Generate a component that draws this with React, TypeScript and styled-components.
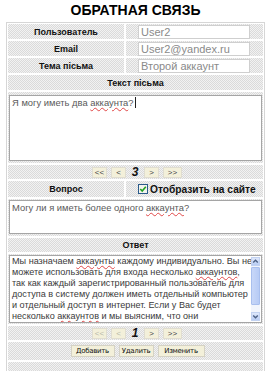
import styled, { createGlobalStyle } from "styled-components"

const GlobalStyle = createGlobalStyle`
    html, body {
        margin: 0;
        padding: 0;
        background: #fff;
    }
    body {
        font-family: "Liberation Sans", Arial, sans-serif;
    }
`

const answerLines = [
    ["Мы назначаем ", "аккаунты", " каждому индивидуально. Вы не"],
    ["можете использовать для входа несколько ", "аккаунтов", ","],
    ["так как каждый зарегистрированный пользователь для"],
    ["доступа в систему должен иметь отдельный компьютер"],
    ["и отдельный доступ в интернет. Если у Вас будет"],
    ["несколько ", "аккаунтов", " и мы выясним, что они"],
]

const Pager = ({ page, first }: { page: number, first?: boolean }) => (
    <PagerRow>
        <PageBtn $w={15} $off={first}>&lt;&lt;</PageBtn>
        <PageBtn $w={15} $off={first}>&lt;</PageBtn>
        <PageNum>{page}</PageNum>
        <PageBtn $w={15}>&gt;</PageBtn>
        <PageBtn $w={19}>&gt;&gt;</PageBtn>
    </PagerRow>
)

const Arrow = ({ up }: { up?: boolean }) => (
    <ArrowBtn>
        <svg width="7" height="7" viewBox="0 0 7 7">
            <path d={up ? "M1.2 4.6 L3.5 2.3 L5.8 4.6" : "M1.2 2.4 L3.5 4.7 L5.8 2.4"} stroke="#4d6185" strokeWidth="1.4" fill="none" />
        </svg>
    </ArrowBtn>
)

const App = () => {
    return (
        <Page>
            <GlobalStyle />
            <Title>ОБРАТНАЯ СВЯЗЬ</Title>
            <Form>
                <Row>
                    <Label>Пользователь</Label>
                    <ValueCell><Input>User2</Input></ValueCell>
                </Row>
                <Row>
                    <Label>Email</Label>
                    <ValueCell><Input>User2@yandex.ru</Input></ValueCell>
                </Row>
                <Row>
                    <Label>Тема пісьма</Label>
                    <ValueCell><Input>Второй аккаунт</Input></ValueCell>
                </Row>
                <Header>Текст пісьма</Header>
                <AreaCell $pad="3px 1px 2px">
                    <TextArea $h={64}>
                        <AreaText>Я могу иметь два <Typo>аккаунта</Typo>?<Caret /></AreaText>
                    </TextArea>
                </AreaCell>
                <Pager page={3} />
                <Row $h={16}>
                    <Label>Вопрос</Label>
                    <CheckCell>
                        <svg width="10" height="10" viewBox="0 0 10 10">
                            <rect x="0.5" y="0.5" width="9" height="9" fill="#f4f4ee" stroke="#2a5a8a" />
                            <path d="M2.3 5 L4.2 7 L7.8 2.8" stroke="#21a121" strokeWidth="1.6" fill="none" />
                        </svg>
                        Отобразить на сайте
                    </CheckCell>
                </Row>
                <AreaCell $pad="1px 1px 2px">
                    <TextArea $h={32}>
                        <AreaText>Могу ли я иметь более одного <Typo>аккаунта</Typo>?</AreaText>
                    </TextArea>
                </AreaCell>
                <Header $h={14}>Ответ</Header>
                <AreaCell $pad="1px">
                    <TextArea $h={66}>
                        <AnswerText>
                            {answerLines.map((line, i) => (
                                <Line key={i}>
                                    {line.map((part, j) => j === 1 ? <Typo key={j}>{part}</Typo> : <span key={j}>{part}</span>)}
                                </Line>
                            ))}
                        </AnswerText>
                        <Scrollbar>
                            <Arrow up />
                            <Track><Thumb /></Track>
                            <Arrow />
                        </Scrollbar>
                    </TextArea>
                </AreaCell>
                <Pager page={1} first />
                <ButtonRow>
                    <Button $w={44}>Добавить</Button>
                    <Button $w={35}>Удалить</Button>
                    <Button $w={47}>Изменить</Button>
                </ButtonRow>
                <EmptyRow />
            </Form>
        </Page>
    )
}

const dots = `
    background-color: #e8e8e8;
    background-image: repeating-conic-gradient(#dadada 0 25%, #f2f2f2 0 50%);
    background-size: 2px 2px;
`

const Page = styled.div`
    width: 268px;
    height: 371px;
    padding: 0 3px 0 6px;
    box-sizing: border-box;
    background: #fff;
`

const Title = styled.div`
    height: 22px;
    line-height: 21px;
    text-align: center;
    font-size: 14px;
    font-weight: bold;
    color: #000;
`

const Form = styled.div`
    display: flex;
    flex-direction: column;
    gap: 2px;
    border: 1px solid #d6d6d6;
    padding: 1px;
    background: #fff;
`

const Row = styled.div<{ $h?: number }>`
    display: grid;
    grid-template-columns: 116px 1fr;
    gap: 2px;
    height: ${p => p.$h ?? 15}px;
`

const Label = styled.div`
    ${dots}
    display: flex;
    align-items: center;
    justify-content: center;
    font-size: 9px;
    font-weight: bold;
    color: #111;
`

const ValueCell = styled.div`
    ${dots}
    display: flex;
    align-items: center;
    padding: 0 13px 0 12px;
`

const CheckCell = styled.div`
    ${dots}
    display: flex;
    align-items: center;
    gap: 2px;
    padding-left: 12px;
    font-size: 10.2px;
    font-weight: bold;
    color: #111;
    white-space: nowrap;
`

const Input = styled.div`
    flex: 1;
    height: 12px;
    line-height: 12px;
    background: #fff;
    border: 1px solid #cfcfcf;
    padding-left: 2px;
    font-size: 11px;
    color: #8a8a8a;
    white-space: nowrap;
    overflow: hidden;
`

const Header = styled.div<{ $h?: number }>`
    ${dots}
    height: ${p => p.$h ?? 15}px;
    display: flex;
    align-items: center;
    justify-content: center;
    font-size: 9px;
    font-weight: bold;
    color: #111;
`

const AreaCell = styled.div<{ $pad: string }>`
    ${dots}
    padding: ${p => p.$pad};
`

const TextArea = styled.div<{ $h: number }>`
    height: ${p => p.$h}px;
    background: #fff;
    border: 1px solid #a5a5a5;
    display: flex;
`

const AreaText = styled.div`
    flex: 1;
    padding: 1px 2px;
    font-size: 9.4px;
    line-height: 12px;
    color: #5a5a5a;
    white-space: nowrap;
`

const AnswerText = styled.div`
    flex: 1;
    overflow: hidden;
    padding: 0 2px;
    font-size: 9.1px;
    line-height: 11px;
    color: #3a3a3a;
`

const Line = styled.div`
    white-space: nowrap;
`

const Typo = styled.span`
    text-decoration: underline wavy #e04848;
    text-decoration-thickness: 1px;
    text-underline-offset: 1px;
`

const Caret = styled.span`
    display: inline-block;
    width: 1px;
    height: 11px;
    background: #222;
    vertical-align: -2px;
    margin-left: 1px;
`

const Scrollbar = styled.div`
    width: 9px;
    margin: 1px 1px 1px 0;
    display: flex;
    flex-direction: column;
    background: #f2f5fc;
`

const ArrowBtn = styled.div`
    height: 9px;
    display: flex;
    align-items: center;
    justify-content: center;
    background: linear-gradient(#dfe8fb, #b9cdf4);
    border: 1px solid #c2d2f1;
    box-sizing: border-box;
`

const Track = styled.div`
    flex: 1;
    padding: 1px 0;
    display: flex;
`

const Thumb = styled.div`
    flex: 1;
    margin: 0 0 6px;
    background: linear-gradient(90deg, #c8d7f8, #b7cbf5);
    border: 1px solid #a9bfee;
    border-radius: 1px;
`

const PagerRow = styled.div`
    ${dots}
    height: 14px;
    display: flex;
    align-items: center;
    justify-content: center;
    gap: 4px;
    padding-left: 3px;
`

const PageBtn = styled.div<{ $w: number, $off?: boolean }>`
    width: ${p => p.$w}px;
    height: 11px;
    box-sizing: border-box;
    display: flex;
    align-items: center;
    justify-content: center;
    background: #f3f0da;
    border: 1px solid #e0ddd0;
    font-size: 8px;
    color: ${p => p.$off ? "#b8b8a8" : "#444"};
`

const PageNum = styled.div`
    width: 10px;
    text-align: center;
    font-size: 12px;
    font-weight: bold;
    font-style: italic;
    color: #111;
`

const ButtonRow = styled.div`
    ${dots}
    height: 18px;
    display: flex;
    align-items: center;
    justify-content: center;
    gap: 4px;
    padding-left: 4px;
`

const Button = styled.div<{ $w: number }>`
    width: ${p => p.$w}px;
    height: 12px;
    box-sizing: border-box;
    display: flex;
    align-items: center;
    justify-content: center;
    background: #f3f0da;
    border: 1px solid #d5d2c4;
    font-family: "DejaVu Sans", sans-serif;
    font-size: 7px;
    letter-spacing: -0.3px;
    color: #111;
    white-space: nowrap;
`

const EmptyRow = styled.div`
    ${dots}
    height: 9px;
`

export default App
